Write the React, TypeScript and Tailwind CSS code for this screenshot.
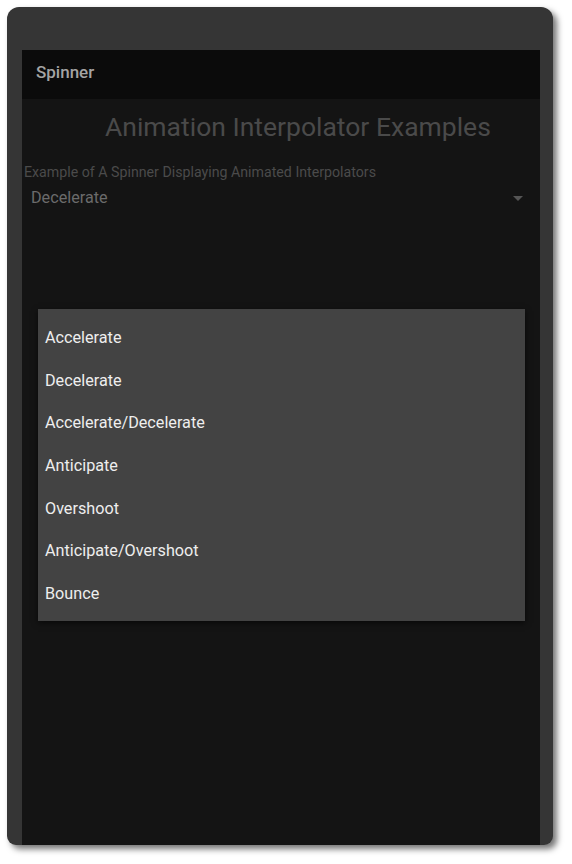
const items = [
  "Accelerate",
  "Decelerate",
  "Accelerate/Decelerate",
  "Anticipate",
  "Overshoot",
  "Anticipate/Overshoot",
  "Bounce",
];

export default function App() {
  return (
    <div className="w-[572px] h-[864px] bg-white pt-[7px] pl-[7px] font-['Roboto',sans-serif]">
      <div className="w-[546px] h-[838px] rounded-t-[12px] rounded-b-[9px] bg-[#353535] pl-[15px] pr-[13px] pt-[43px] shadow-[4px_4px_6px_rgba(0,0,0,0.55)] overflow-hidden">
        <div className="relative h-full bg-[#141414] flex flex-col">
          <div className="h-[49px] bg-[#0b0b0b] flex items-center pl-[14px] pb-[4px] text-[17px] font-medium text-[#a4a4a4]">
            Spinner
          </div>
          <div className="pt-[11px] pl-[83px] text-[26.5px] leading-[34px] text-[#4a4a4a]">
            Animation Interpolator Examples
          </div>
          <div className="mt-[19px] pl-[2px] text-[14.2px] leading-[18px] text-[#4b4b4b]">
            Example of A Spinner Displaying Animated Interpolators
          </div>
          <div className="flex items-center justify-between pl-[9px] pr-[17px] h-[34px]">
            <span className="text-[16.2px] text-[#6b6b6b]">Decelerate</span>
            <svg width="10" height="5" viewBox="0 0 10 5">
              <path d="M0 0h10L5 5z" fill="#555555" />
            </svg>
          </div>

          <div className="absolute left-[16px] top-[259px] w-[487px] h-[312px] bg-[#434343] shadow-[0_2px_6px_rgba(0,0,0,0.6)] pt-[8px]">
            {items.map((it) => (
              <div key={it} className="h-[42.67px] flex items-center px-[7px] text-[16.2px] text-[#eeeeee]">
                {it}
              </div>
            ))}
          </div>
        </div>
      </div>
    </div>
  );
}
